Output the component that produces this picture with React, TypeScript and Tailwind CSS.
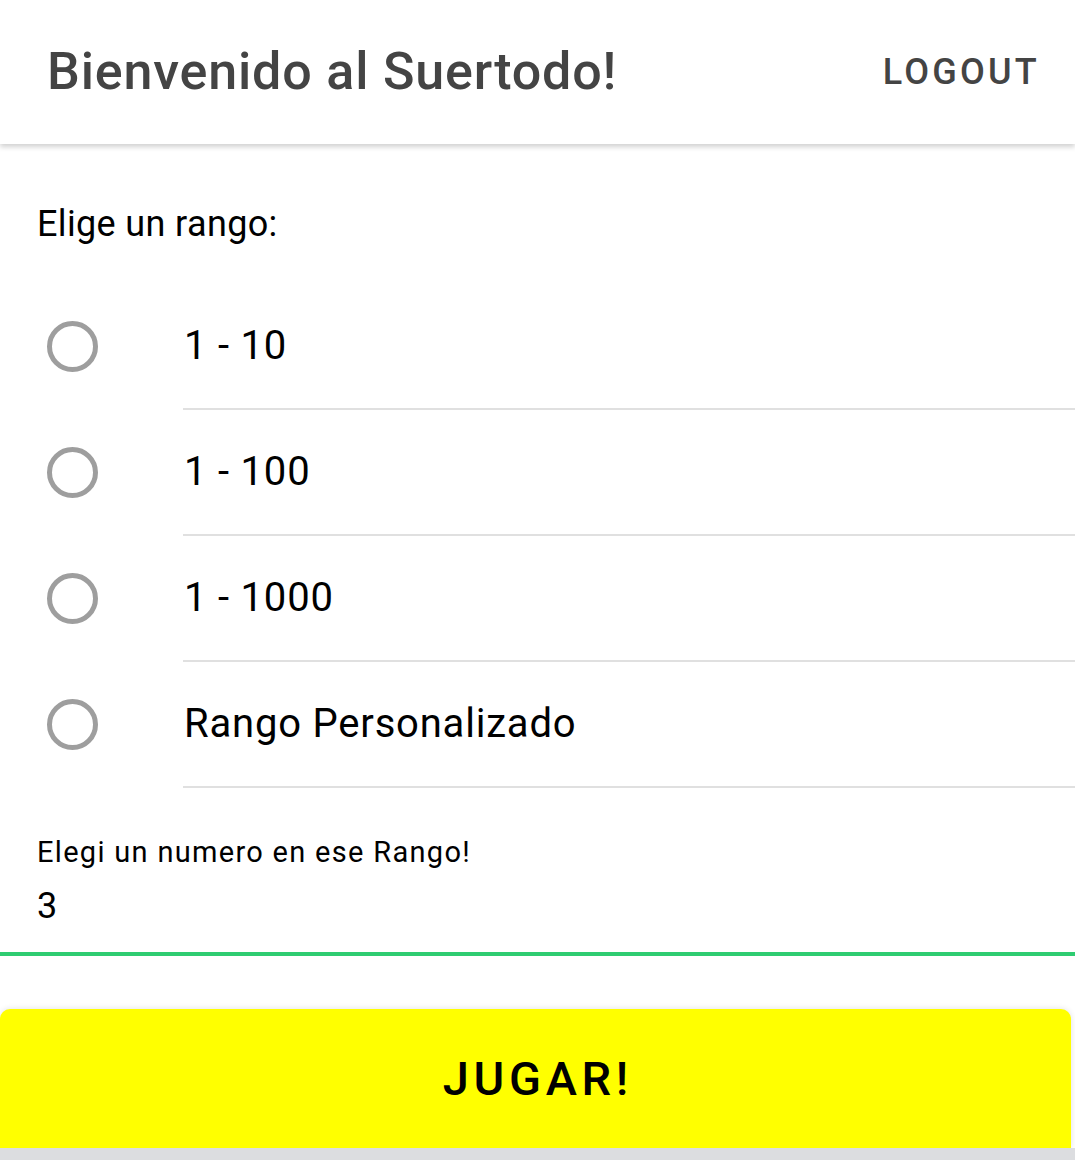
import React from "react";

const options = ["1 - 10", "1 - 100", "1 - 1000", "Rango Personalizado"];

export default function App() {
  return (
    <div className="w-[1075px] h-[1160px] bg-white flex flex-col overflow-hidden" style={{ fontFamily: "Roboto, 'Liberation Sans', sans-serif" }}>
      <header className="h-[144px] shrink-0 flex items-center justify-between pl-[47px] pr-[35px] bg-white shadow-[0_3px_5px_rgba(0,0,0,0.18)] relative z-10">
        <h1 className="text-[52px] leading-none font-medium text-[#444444] tracking-[0.016em]">Bienvenido al Suertodo!</h1>
        <button className="text-[36px] leading-none font-medium text-[#444444] tracking-[0.09em]">LOGOUT</button>
      </header>
      <main className="flex flex-col flex-1">
        <p className="mt-[59px] pl-[37px] text-[36px] leading-[42px] text-black tracking-[0.01em]">Elige un rango:</p>
        <div className="mt-[39px] flex flex-col">
          {options.map((o) => (
            <div key={o} className="flex h-[126px]">
              <div className="w-[183px] shrink-0 flex items-center pl-[47px] pb-[2px]">
                <div className="w-[51px] h-[51px] rounded-full border-[5px] border-[#9e9e9e]" />
              </div>
              <div className="flex-1 flex items-center border-b-2 border-[#e0e0e0] text-[40px] text-black pl-px tracking-[0.02em]">{o}</div>
            </div>
          ))}
        </div>
        <div className="mt-[47px] pl-[37px] text-[29px] leading-[34px] text-black tracking-[0.045em]">Elegi un numero en ese Rango!</div>
        <div className="mt-[16px] pl-[37px] text-[36px] leading-[42px] text-black">3</div>
        <div className="mt-[25px] h-[4px] bg-[#2ecc71]" />
        <div className="mt-[53px] w-[1071px] h-[139px] bg-[#ffff00] rounded-t-[10px] shadow-[0_0_6px_rgba(0,0,0,0.12)] flex items-center justify-center">
          <span className="text-[47px] leading-none font-medium text-black tracking-[0.1em] pl-[0.1em]">JUGAR!</span>
        </div>
        <div className="h-[14px] bg-[#dcdde0]" />
      </main>
    </div>
  );
}
